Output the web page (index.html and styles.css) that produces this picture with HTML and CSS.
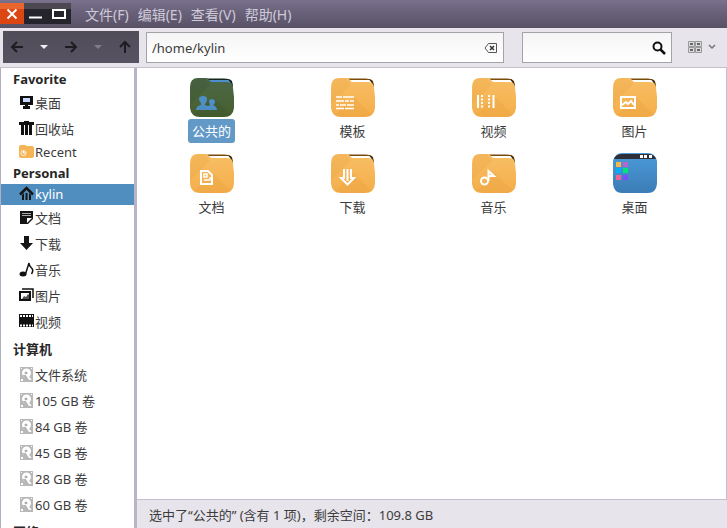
FILE: index.html
```html
<!DOCTYPE html>
<html lang="zh-CN">
<head>
<meta charset="utf-8">
<title>kylin</title>
<link rel="stylesheet" href="styles.css">
</head>
<body>
<svg class="defs" aria-hidden="true">
  <defs>
    <linearGradient id="amber" x1="0" y1="0" x2="0" y2="1"><stop offset="0" stop-color="#f8be64"/><stop offset="1" stop-color="#f4ae4b"/></linearGradient>
    <linearGradient id="green" x1="0" y1="0" x2="0" y2="1"><stop offset="0" stop-color="#4c6747"/><stop offset="1" stop-color="#48602f"/></linearGradient>
    <linearGradient id="blue" x1="0" y1="0" x2="0" y2="1"><stop offset="0" stop-color="#4b9bdb"/><stop offset="1" stop-color="#3b7cb5"/></linearGradient>
    <symbol id="folder" viewBox="0 0 44 41">
      <path d="M17 1.500H34Q40 1.500 42 4L43 10H17Z" fill="#7a4a08"/>
      <path d="M19 3H38Q41 3 42 9H19Z" fill="#fff"/>
      <path d="M38 2Q42 3 43 9L40 5Z" fill="#3a2406"/>
      <path d="M0 10Q0 1 8 1H16Q18 1 19 3Q20 5 22 5H37Q43 5 43 11L44 20V31Q43 40 34 40H10Q1 40 0 31Z" fill="url(#amber)"/>
      <path d="M1 8Q2 1 8 1H15L20 8L0 27ZM23 20L41 38Q38 40 34 40H10L4 38Z" fill="#d98d25" opacity=".13"/>
    </symbol>
    <symbol id="drive" viewBox="0 0 16 16">
      <path d="M1 0H14V15H1Z" fill="#b8b8b8"/>
      <circle cx="7.500" cy="6" r="4.500" fill="#fff"/>
      <circle cx="7" cy="6" r="1.500" fill="#b0b0b0"/>
      <path d="M3 8L7 8L11 13H8L5 10Z" fill="#b8b8b8"/>
      <path d="M7 7L12 12.500H10Z" fill="#fff" stroke="#fff"/>
      <path d="M2 12h2v2H2zM2 1h1v1H2zM12 1h1v1h-1z" fill="#fff"/>
    </symbol>
  </defs>
</svg>
<div class="window">
  <header class="titlebar">
    <div class="controls">
      <button class="close" aria-label="关闭"><svg width="12" height="12" viewBox="0 0 12 12"><path d="M1.500 1.500L10.500 10.500M10.500 1.500L1.500 10.500" stroke="#fff" stroke-width="2"/></svg></button>
      <button aria-label="最小化"><svg width="13" height="10" viewBox="0 0 13 10"><path d="M0 8.500H13" stroke="#fff" stroke-width="2"/></svg></button>
      <button aria-label="最大化"><svg width="14" height="10" viewBox="0 0 14 10"><path d="M1 1H13V9H1Z" fill="none" stroke="#fff" stroke-width="2"/></svg></button>
    </div>
    <nav class="menus"><button>文件(F)</button><button>编辑(E)</button><button>查看(V)</button><button>帮助(H)</button></nav>
  </header>
  <div class="toolbar">
    <div class="nav">
      <button aria-label="后退"><svg width="14" height="14" viewBox="0 0 14 14"><path d="M13 7H2M7 2L2 7L7 12" class="stroke"/></svg></button>
      <button aria-label="后退历史"><svg width="10" height="6" viewBox="0 0 10 6"><path d="M1 1H9L5 5Z" fill="#f0edf5"/></svg></button>
      <button aria-label="前进"><svg width="14" height="14" viewBox="0 0 14 14"><path d="M1 7H12M7 2L12 7L7 12" class="stroke"/></svg></button>
      <button aria-label="前进历史"><svg width="10" height="6" viewBox="0 0 10 6"><path d="M1 1H9L5 5Z" fill="#817c8b"/></svg></button>
      <button aria-label="上一级"><svg width="14" height="14" viewBox="0 0 14 14"><path d="M7 13V2M2 7L7 2L12 7" class="stroke"/></svg></button>
    </div>
    <div class="field path">
      <input type="text" aria-label="路径" value="/home/kylin">
      <button aria-label="清除"><svg width="14" height="10" viewBox="0 0 14 10"><path d="M4.500 .5H12.500V9.500H4.500L1 5Z" fill="none" stroke="#555"/><path d="M6 3L10 7M10 3L6 7" stroke="#333" stroke-width="1.500"/></svg></button>
    </div>
    <div class="field search">
      <input type="text" aria-label="搜索">
      <button aria-label="搜索"><svg width="14" height="14" viewBox="0 0 14 14"><circle cx="5.500" cy="5.500" r="4" fill="none" stroke="#111" stroke-width="2"/><path d="M8.500 8.500L13 13" stroke="#111" stroke-width="2.500"/></svg></button>
    </div>
    <button class="view" aria-label="视图">
      <svg width="14" height="12" viewBox="0 0 14 12"><path d="M.5 .5H6.500V5.500H.5ZM7.500 .5H13.500V5.500H7.500ZM.5 6.500H6.500V11.500H.5ZM7.500 6.500H13.500V11.500H7.500Z" fill="#ddd" stroke="#999"/><path d="M2 2h3v2H2zM9 2h3v2H9zM2 8h3v2H2zM9 8h3v2H9z" fill="#666"/></svg>
      <svg width="8" height="6" viewBox="0 0 8 6"><path d="M1 1L4 4L7 1" fill="none" stroke="#777" stroke-width="1.500"/></svg>
    </button>
  </div>
  <div class="body">
    <aside class="sidebar">
      <h2>Favorite</h2>
      <ul>
        <li><a href="#"><svg viewBox="0 0 16 16"><path d="M1 1H14V10H1Z" fill="#111"/><path d="M4 3H11V7H4Z" fill="#c9d9ff"/><path d="M6 10h3v1h2v3H4v-3h2z" fill="#111"/></svg>桌面</a></li>
        <li><a href="#"><svg viewBox="0 0 16 16"><path d="M0 1H5V0H10V1H15V4H0ZM2 4H5V14H2ZM6 4H9V14H6ZM10 4H13V14H10Z" fill="#111"/></svg>回收站</a></li>
        <li class="latin"><a href="#"><svg viewBox="0 0 16 16"><path d="M0 3Q0 1 2 1H6L8 2H13Q15 2 15 4V12Q15 14 13 14H2Q0 14 0 12Z" fill="#f5b556"/><circle cx="4.500" cy="9" r="2.500" fill="#f3b75f" stroke="#fff3d8"/><path d="M4.500 7V9H6" fill="none" stroke="#fff"/></svg>Recent</a></li>
      </ul>
      <h2>Personal</h2>
      <ul>
        <li class="latin active"><a href="#"><svg viewBox="0 0 16 16"><path d="M1 8.500L7.500 2L14 8.500" fill="none" stroke="#151515" stroke-width="2.500"/><path d="M3 9L5 7V14H3ZM6.500 7H8.500V14H6.500ZM10 7L12 9V14H10Z" fill="#151515"/></svg>kylin</a></li>
        <li><a href="#"><svg viewBox="0 0 16 16"><path d="M1 1H14V9L9 14H1Z" fill="#151515"/><path d="M3 3.500H12M3 5.500H12" stroke="#aaa"/><path d="M8 13V8H13Z" fill="#fff"/></svg>文档</a></li>
        <li><a href="#"><svg viewBox="0 0 16 16"><path d="M5 0H10V7H14L7.500 14L1 7H5Z" fill="#151515"/></svg>下载</a></li>
        <li><a href="#"><svg viewBox="0 0 16 16"><ellipse cx="4" cy="12" rx="3.500" ry="2.500" fill="#111"/><path d="M6.500 12L10 1Q10 4 12.500 6Q15 8 12.500 12" fill="none" stroke="#111" stroke-width="1.500"/></svg>音乐</a></li>
        <li><a href="#"><svg viewBox="0 0 16 16"><path d="M3 1H14V10" fill="none" stroke="#111" stroke-width="1.500"/><path d="M1 4H11V12H1Z" fill="#fff" stroke="#111" stroke-width="2"/><path d="M3 11L5 8L7 9L9 6L10 7V11Z" fill="#555"/></svg>图片</a></li>
        <li><a href="#"><svg viewBox="0 0 16 16"><path d="M0 0H15V13H0Z" fill="#111"/><path d="M1 2H14M1 11.500H14" stroke="#fff" stroke-width="2" stroke-dasharray="2 1"/></svg>视频</a></li>
      </ul>
      <h2 class="cjk">计算机</h2>
      <ul>
        <li><a href="#"><svg><use href="#drive"/></svg>文件系统</a></li>
        <li><a href="#"><svg><use href="#drive"/></svg>105 GB 卷</a></li>
        <li><a href="#"><svg><use href="#drive"/></svg>84 GB 卷</a></li>
        <li><a href="#"><svg><use href="#drive"/></svg>45 GB 卷</a></li>
        <li><a href="#"><svg><use href="#drive"/></svg>28 GB 卷</a></li>
        <li><a href="#"><svg><use href="#drive"/></svg>60 GB 卷</a></li>
      </ul>
      <h2 class="cjk">网络</h2>
    </aside>
    <main class="main">
      <div class="files">
        <a class="file selected" href="#"><svg viewBox="0 0 44 41"><path d="M17 1.500H34Q40 1.500 42 4L43 10H17Z" fill="#17261c"/><path d="M19 3H38Q41 3 42 9H19Z" fill="#4d8fca"/><path d="M38 2Q42 3 43 9L40 5Z" fill="#17261c"/><path d="M0 10Q0 1 8 1H16Q18 1 19 3Q20 5 22 5H37Q43 5 43 11L44 20V31Q43 40 34 40H10Q1 40 0 31Z" fill="url(#green)"/><path d="M1 8Q2 1 8 1H15L20 8L0 27ZM23 20L41 38Q38 40 34 40H10L4 38Z" fill="#2d4a28" opacity=".2"/><path d="M6 33Q6 29 11 28V26Q9 24 9 22Q9 19 13 19Q17 19 17 22Q17 25 15 27V28Q20 29 20 33ZM19 33V31L17 29Q20 29 20 27Q19 26 19 25Q19 22 22 22Q25 22 25 25Q25 27 23 28Q27 30 27 33Z" fill="#4d8fc5"/></svg><span>公共的</span></a>
        <a class="file" href="#"><svg viewBox="0 0 44 41"><use href="#folder"/><path d="M5 20H11M12 20H23M5 24H13M14 24H18M19 24H23M5 28H8M9 28H15M16 28H23M5 31.500H13M14 31.500H23" stroke="#fff" stroke-width="1.500"/></svg><span>模板</span></a>
        <a class="file" href="#"><svg viewBox="0 0 44 41"><use href="#folder"/><path d="M6 18V31M21.500 18V31" stroke="#fff" stroke-width="2"/><path d="M10 18V31M17 18V31" stroke="#fff" stroke-width="2" stroke-dasharray="2 1.500"/></svg><span>视频</span></a>
        <a class="file" href="#"><svg viewBox="0 0 44 41"><use href="#folder"/><path d="M8 20H22V31H8Z" fill="none" stroke="#fff" stroke-width="2"/><path d="M9 28L13 25L15 27L18 24L21 28" fill="none" stroke="#fff" stroke-width="2"/></svg><span>图片</span></a>
        <a class="file" href="#"><svg viewBox="0 0 44 41"><use href="#folder"/><path d="M11 18H18L22 22V31H11Z" fill="none" stroke="#fff" stroke-width="2"/><path d="M14 21H17V24H14ZM14 27H20V24" fill="none" stroke="#fff" stroke-width="1.500"/></svg><span>文档</span></a>
        <a class="file" href="#"><svg viewBox="0 0 44 41"><use href="#folder"/><path d="M13 16V25H10L16.500 31.500L23 25H20V16" fill="none" stroke="#fff" stroke-width="2"/><path d="M16.500 16V28" stroke="#fff" stroke-width="2"/></svg><span>下载</span></a>
        <a class="file" href="#"><svg viewBox="0 0 44 41"><use href="#folder"/><circle cx="12.500" cy="28" r="3.500" fill="none" stroke="#fff" stroke-width="2"/><path d="M16.500 28V18L22 23H17" fill="none" stroke="#fff" stroke-width="2"/></svg><span>音乐</span></a>
        <a class="file" href="#"><svg viewBox="0 0 44 41"><path d="M0 8Q2 0 9 0H35Q42 0 44 8V31Q43 40 35 40H9Q1 40 0 31Z" fill="url(#blue)"/><path d="M1 6Q3 1 9 1H35Q41 1 43 6H1Z" fill="#302f38"/><path d="M27 2h3v3h-3zM31 2h3v3h-3zM36 2h3v3h-3z" fill="#fff"/><path d="M3 9h5v5H3z" fill="#f7b94e"/><path d="M10 9h5v5h-5z" fill="#b067d0"/><path d="M3 15h5v5H3z" fill="#00aefa"/><path d="M10 15h5v5h-5z" fill="#00e676"/><path d="M3 22h5v5H3z" fill="#f06292"/><path d="M10 22h5v5h-5z" fill="#7c4dff"/></svg><span>桌面</span></a>
      </div>
      <footer class="status">选中了“公共的” (含有 1 项)，剩余空间：109.8 GB</footer>
    </main>
  </div>
</div>
</body>
</html>
```
FILE: styles.css
```css
* { box-sizing: border-box; }
body { margin: 0; overflow: hidden; font: 13px "Noto Sans", "Noto Sans CJK SC", sans-serif; color: #3c3c3c; }
button, input { margin: 0; padding: 0; border: 0; background: none; font: inherit; color: inherit; }
button { display: flex; align-items: center; justify-content: center; }
a { color: inherit; text-decoration: none; }
.defs { position: absolute; width: 0; height: 0; }
.window { display: flex; flex-direction: column; height: 100vh; background: #e7e4eb; }
.titlebar { display: flex; align-items: flex-start; flex: none; height: 28px; background: linear-gradient(#7a728c, #69617a 45%, #5a5367); border-bottom: 1px solid #565062; }
.controls { display: flex; height: 25px; padding: 3px 0 1px; }
.controls button { width: 23px; background: linear-gradient(#4b4852 30%, #25242c 31%); }
.controls button:last-child { width: 24px; }
.controls .close { width: 24px; background: linear-gradient(#e9662e 30%, #dc4612 31%); }
.menus { display: flex; gap: 9px; padding-left: 14px; font-size: 14px; }
.menus button { height: 28px; color: #cfcad8; }
.toolbar { display: flex; flex: none; height: 40px; padding: 3px 11px 4px 3px; border-bottom: 1px solid #c4c0ce; }
.nav { display: flex; flex: none; width: 136px; background: linear-gradient(#504c58, #585362); }
.nav button { flex: 1; }
.stroke { fill: none; stroke: #1d1c20; stroke-width: 2; }
.field { display: flex; align-items: center; height: 31px; margin-top: 1px; padding: 0 5px; border: 1px solid #a5a3aa; background: linear-gradient(#f5f5f5, #fff); }
.field input { flex: 1; min-width: 0; outline: 0; }
.path { flex: 1; margin-left: 7px; }
.search { flex: none; width: 150px; margin-left: 18px; }
.view { gap: 6px; margin-left: 16px; }
.body { display: flex; flex: 1; min-height: 0; }
.sidebar { flex: none; width: 137px; overflow: hidden; padding-top: 1px; background: #fff; border-left: 1px solid #b4afc0; border-right: 3px solid #b9b4c5; }
h2 { margin: 0; padding-left: 12px; font-size: 13px; line-height: 21px; color: #262626; }
.sidebar .cjk { padding-top: 1px; line-height: 26px; }
ul { margin: 0; padding: 0; list-style: none; }
.sidebar li { height: 26px; line-height: 26px; }
.sidebar li a { display: flex; padding-left: 18px; }
.sidebar li svg { width: 16px; height: 16px; margin-top: 5px; }
.sidebar .latin { height: 21px; line-height: 21px; }
.sidebar .latin svg { margin-top: 2px; }
.sidebar .active { background: #508ebf; color: #fff; }
.main { display: flex; flex: 1; flex-direction: column; min-width: 0; }
.files { flex: 1; display: grid; grid-template-columns: repeat(auto-fill, 141px); grid-auto-rows: 76px; padding: 9px 4px 0; background: #fff; border-right: 1px solid #c4c0ce; }
.file { display: flex; flex-direction: column; align-items: center; gap: 1px; }
.file svg { width: 44px; height: 41px; }
.file span { padding: 0 4px; line-height: 24px; border-radius: 3px; }
.file.selected span { background: #6399c7; color: #fff; }
.status { flex: none; height: 29px; padding-left: 12px; line-height: 30px; border-top: 1px solid #c4c0ce; }
```
